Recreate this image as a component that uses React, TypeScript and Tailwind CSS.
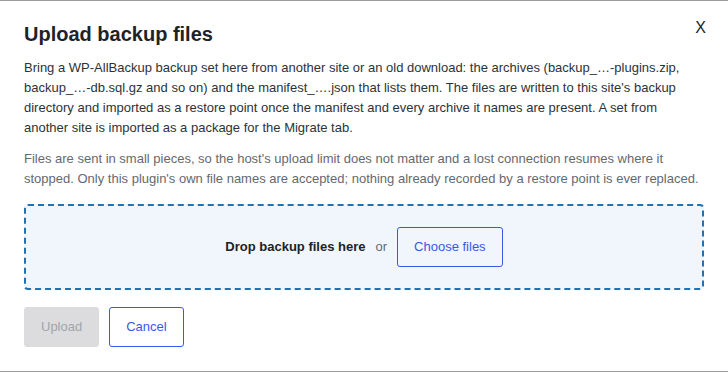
export default function App() {
  return (
    <div className="relative h-[372px] w-full overflow-hidden border-y border-[#9a9a9a] bg-white px-6 font-['Liberation_Sans',Arial,sans-serif]">
      {/* ── Close ── */}
      <button className="absolute right-[22px] top-[17px] text-[16px] leading-[20px] text-[#1d2327]">X</button>

      {/* ── Heading ── */}
      <h1 className="pt-5 text-[20px] font-bold leading-[26px] text-[#1d2327]">Upload backup files</h1>

      <p className="mt-[11px] text-[13px] leading-5 text-[#2c3338]">
        Bring a WP-AllBackup backup set here from another site or an old download: the archives (backup_…-plugins.zip,
        backup_…-db.sql.gz and so on) and the manifest_….json that lists them. The files are written to this site's backup
        directory and imported as a restore point once the manifest and every archive it names are present. A set from
        another site is imported as a package for the Migrate tab.
      </p>

      <p className="mt-[11px] text-[13px] leading-5 text-[#646970]">
        Files are sent in small pieces, so the host's upload limit does not matter and a lost connection resumes where it
        stopped. Only this plugin's own file names are accepted; nothing already recorded by a restore point is ever replaced.
      </p>

      {/* ── Drop zone ── */}
      <div className="mt-[15px] flex items-center justify-center gap-[10px] rounded-[4px] border-2 border-dashed border-[#2271b1] bg-[#f0f6fc] py-[21px]">
        <span className="text-[13px] font-bold text-[#1d2327]">Drop backup files here</span>
        <span className="text-[13px] text-[#646970]">or</span>
        <button className="h-10 rounded-[3px] border border-[#3858e9] bg-transparent px-4 text-[13px] text-[#3858e9]">
          Choose files
        </button>
      </div>

      {/* ── Actions ── */}
      <div className="mt-[17px] flex gap-[10px]">
        <button disabled className="h-10 rounded-[3px] border border-[#dcdcde] bg-[#dcdcde] px-4 text-[13px] text-[#a0a5aa]">
          Upload
        </button>
        <button className="h-10 rounded-[3px] border border-[#3858e9] bg-white px-4 text-[13px] text-[#3858e9]">
          Cancel
        </button>
      </div>
    </div>
  );
}
